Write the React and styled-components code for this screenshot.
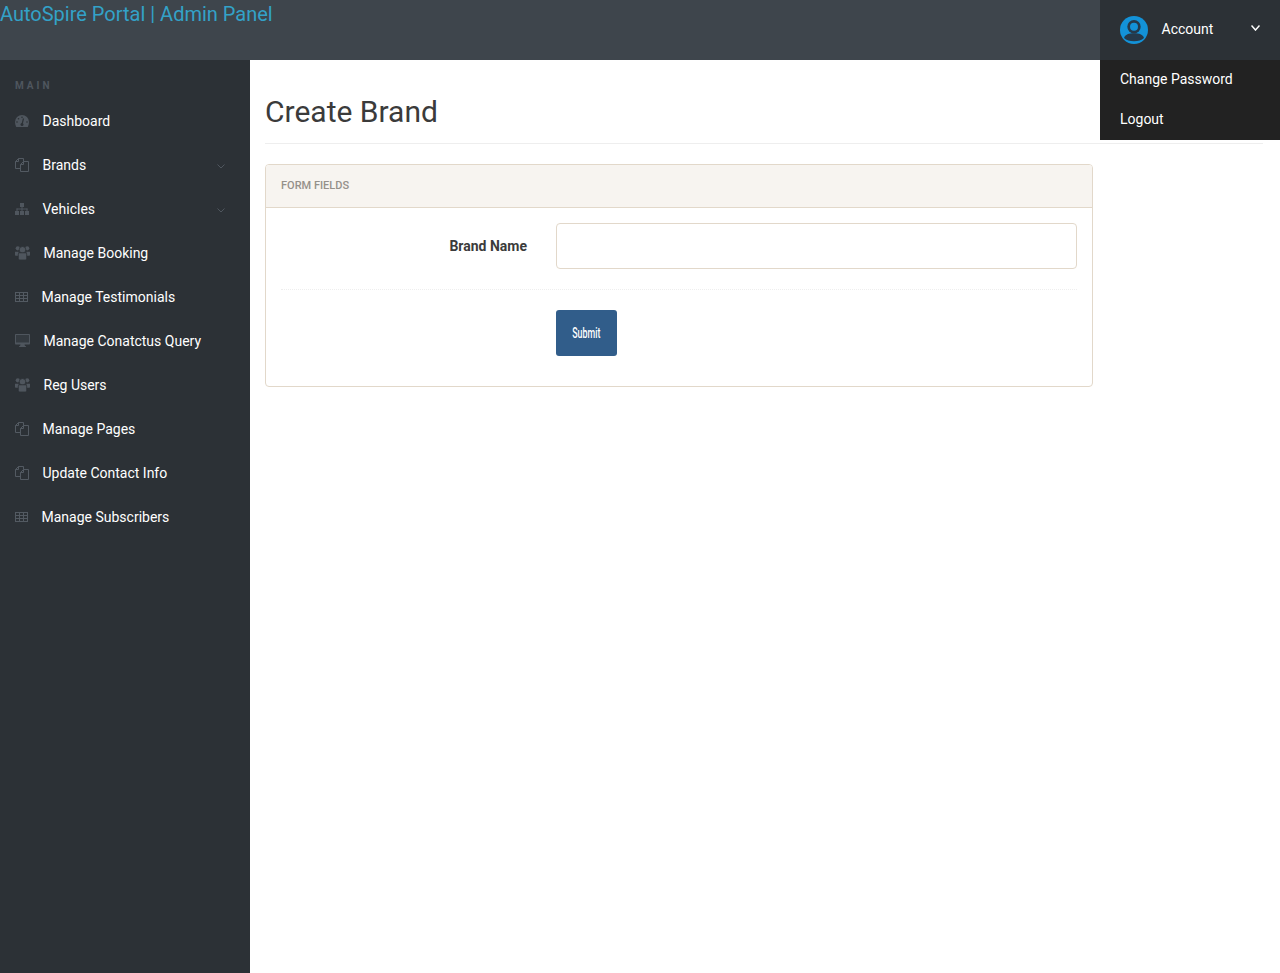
import styled, { createGlobalStyle } from 'styled-components';

const GlobalStyle = createGlobalStyle`
  html, body {
    margin: 0;
    padding: 0;
    background: #fff;
  }
  body {
    font-family: Roboto, "Liberation Sans", sans-serif;
    font-size: 14px;
    color: #3b3b3b;
  }
`;

const Page = styled.div`
  width: 1280px;
  height: 973px;
  display: flex;
  flex-direction: column;
  overflow: hidden;
`;

const TopBar = styled.header`
  height: 60px;
  flex: none;
  display: flex;
  justify-content: space-between;
  background: #3e454c;
`;

const Brand = styled.a`
  font-size: 20px;
  line-height: 28px;
  color: #33a2c8;
`;

const AccountWrap = styled.div`
  position: relative;
  width: 180px;
`;

const AccountButton = styled.div`
  height: 60px;
  display: flex;
  align-items: center;
  padding-left: 20px;
  background: #2c3136;
  color: #fff;
  font-size: 14px;
`;

const AccountName = styled.span`
  margin: 0 0 2px 13.5px;
  flex: 1;
`;

const AccountCaret = styled.svg`
  width: 9px;
  height: 6px;
  margin: 0 20px 5px 0;
  fill: none;
  stroke: #fff;
  stroke-width: 1.5;
`;

const Dropdown = styled.ul`
  position: absolute;
  top: 60px;
  left: 0;
  width: 100%;
  height: 80px;
  margin: 0;
  padding: 0;
  list-style: none;
  background: #222;
`;

const DropdownItem = styled.li`
  height: 40px;
  padding-left: 20px;
  line-height: 38px;
  color: #fff;
`;

const Body = styled.div`
  flex: 1;
  display: flex;
`;

const Sidebar = styled.nav`
  width: 250px;
  flex: none;
  padding-top: 18px;
  background: #2c3136;
  box-sizing: border-box;
`;

const SideLabel = styled.div`
  height: 21px;
  padding-left: 15px;
  font-size: 10px;
  font-weight: 700;
  line-height: 16px;
  letter-spacing: 3px;
  color: #4f565e;
`;

const SideItem = styled.div`
  height: 44px;
  display: flex;
  align-items: center;
  padding: 0 25px 0 15px;
  color: #fff;
  font-size: 14px;
`;

const SideIcon = styled.svg`
  flex: none;
  width: ${(p) => p.$w}px;
  height: ${(p) => p.$h}px;
  margin-right: 13.5px;
  fill: ${(p) => (p.$outline ? 'none' : '#4f565e')};
  stroke: ${(p) => (p.$outline ? '#535a62' : 'none')};
`;

const SideText = styled.span`
  flex: 1;
`;

const SideCaret = styled.svg`
  width: 8px;
  height: 5px;
  margin: 2px 0 0;
  fill: none;
  stroke: #4f565e;
  stroke-width: 1;
`;

const Main = styled.main`
  flex: 1;
  padding: 0 15px;
`;

const Title = styled.h2`
  width: 998px;
  margin: 0 0 20px;
  padding: 34px 0 13px;
  border-bottom: 1px solid #eee;
  font-size: 30px;
  font-weight: 400;
  line-height: 36px;
  color: #3b3b3b;
`;

const Panel = styled.section`
  width: 828px;
  box-sizing: border-box;
  border: 1px solid #e2d8ca;
  border-radius: 4px;
`;

const PanelHead = styled.div`
  height: 42px;
  padding-left: 15px;
  background: #f7f4f0;
  border-bottom: 1px solid #e2d8ca;
  border-radius: 3px 3px 0 0;
  font-size: 11px;
  font-weight: 500;
  line-height: 42px;
  color: #95908a;
`;

const PanelBody = styled.div`
  padding: 15px 15px 30px;
`;

const FieldRow = styled.div`
  display: flex;
  align-items: center;
  padding-bottom: 20px;
  margin-bottom: 20px;
  border-bottom: 1px dotted #eee;
`;

const FieldLabel = styled.label`
  width: 246px;
  flex: none;
  margin-right: 29px;
  text-align: right;
  font-weight: 700;
  color: #3b3b3b;
`;

const ButtonSlot = styled.div`
  margin-left: 275px;
`;

const TextInput = styled.input`
  flex: 1;
  height: 46px;
  box-sizing: border-box;
  border: 1px solid #e2d8ca;
  border-radius: 4px;
  background: #fff;
`;

const SubmitButton = styled.button`
  display: block;
  width: 61px;
  height: 46px;
  padding: 0;
  border: none;
  border-radius: 3px;
  background: #315d8a;
  color: #fff;
  font-family: Roboto, sans-serif;
  font-size: 14px;
  font-weight: 500;
`;

const SubmitLabel = styled.span`
  display: inline-block;
  transform: scaleX(0.63);
`;

const BG = '#2c3136';

const Dash = () => (
  <SideIcon $w={14} $h={12} viewBox="0 0 14 12">
    <path d="M7 0A7 7 0 0 0 0 7c0 1.800.4 3.400 1.200 5h11.600c.8-1.600 1.200-3.200 1.200-5A7 7 0 0 0 7 0z" />
    <g fill={BG}>
      <circle cx="7" cy="2.200" r=".8" />
      <circle cx="3.500" cy="3.700" r=".8" />
      <circle cx="2" cy="7" r=".8" />
      <circle cx="12" cy="7" r=".8" />
      <circle cx="7" cy="9.500" r="1.500" />
    </g>
    <path d="M7 9.500L8.500 3.500" stroke={BG} strokeWidth="1.200" />
  </SideIcon>
);

const Files = () => (
  <SideIcon $w={14} $h={14} $outline viewBox="0 0 14 14">
    <path d="M5.500 10.500H.5V3.500L3.500.5H8.500V3.500" />
    <path d="M3.500.5V3.500H.5" />
    <path d="M8.500 3.500H13.500V13.500H5.500V6.500z" />
    <path d="M8.500 3.500V6.500H5.500" />
  </SideIcon>
);

const Sitemap = () => (
  <SideIcon $w={14} $h={12} viewBox="0 0 14 12">
    <rect x="5" y="0" width="4" height="4" />
    <rect x="0" y="8" width="4" height="4" />
    <rect x="5" y="8" width="4" height="4" />
    <rect x="10" y="8" width="4" height="4" />
    <rect x="6.500" y="4" width="1" height="4" />
    <rect x="1.500" y="5.500" width="11" height="1" />
    <rect x="1.500" y="5.500" width="1" height="2.500" />
    <rect x="11.500" y="5.500" width="1" height="2.500" />
  </SideIcon>
);

const Users = () => (
  <SideIcon $w={15} $h={14} viewBox="0 0 15 14">
    <circle cx="2.800" cy="2.300" r="2.100" />
    <circle cx="12.200" cy="2.300" r="2.100" />
    <path d="M0 5.800h3.500v4H1c-.6 0-1-.4-1-1zM11.500 5.800H15v2.900c0 .6-.4 1-1 1h-2.500z" />
    <circle cx="7.500" cy="3.800" r="3.300" stroke={BG} strokeWidth=".8" />
    <path d="M3.300 8.300c0-.9.6-1.500 1.500-1.500h5.400c.9 0 1.500.6 1.500 1.500v4.200c0 .9-.6 1.500-1.500 1.500H4.800c-.9 0-1.500-.6-1.500-1.500z" stroke={BG} strokeWidth=".8" />
  </SideIcon>
);

const Table = () => (
  <SideIcon $w={13} $h={10} $outline viewBox="0 0 13 10">
    <rect x=".5" y=".5" width="12" height="9" />
    <path d="M.5 3.500h12M.5 6.500h12M4.500 .5v9M8.500 .5v9" />
  </SideIcon>
);

const Desktop = () => (
  <SideIcon $w={15} $h={14} viewBox="0 0 15 14">
    <path d="M1 0h13c.6 0 1 .4 1 1v8.500c0 .6-.4 1-1 1H9.500l.5 1.500h.9v1H4.100v-1H5l.5-1.500H1c-.6 0-1-.4-1-1V1c0-.6.4-1 1-1z" />
    <rect x="1" y="1" width="13" height="7.500" fill="#343a40" />
  </SideIcon>
);

const Chevron = ({ Shape, w, h }) => (
  <Shape viewBox={`0 0 ${w} ${h}`}>
    <path d={`M.5 .5L${w / 2} ${h - 1}L${w - 0.5} .5`} />
  </Shape>
);

const AvatarSvg = () => (
  <svg width="28" height="28" viewBox="0 0 28 28">
    <circle cx="14" cy="14" r="14" fill="#1392d8" />
    <circle cx="14" cy="10.700" r="6.700" fill="#25394a" />
    <circle cx="14" cy="10.700" r="4" fill="#1392d8" />
    <path d="M4 22C5 18.500 9 17.300 14 17.300s9 1.200 10 4.700c-2.500 2.300-5.800 3.200-10 3.200S6.500 24.300 4 22z" fill="#25394a" />
  </svg>
);

const menu = [
  { label: 'Dashboard', Icon: Dash },
  { label: 'Brands', Icon: Files, caret: true },
  { label: 'Vehicles', Icon: Sitemap, caret: true },
  { label: 'Manage Booking', Icon: Users },
  { label: 'Manage Testimonials', Icon: Table },
  { label: 'Manage Conatctus Query', Icon: Desktop },
  { label: 'Reg Users', Icon: Users },
  { label: 'Manage Pages', Icon: Files },
  { label: 'Update Contact Info', Icon: Files },
  { label: 'Manage Subscribers', Icon: Table },
];

export default function App() {
  return (
    <Page>
      <GlobalStyle />
      <TopBar>
        <Brand>AutoSpire Portal | Admin Panel</Brand>
        <AccountWrap>
          <AccountButton>
            <AvatarSvg />
            <AccountName>Account</AccountName>
            <Chevron Shape={AccountCaret} w={9} h={6} />
          </AccountButton>
          <Dropdown>
            <DropdownItem>Change Password</DropdownItem>
            <DropdownItem>Logout</DropdownItem>
          </Dropdown>
        </AccountWrap>
      </TopBar>
      <Body>
        <Sidebar>
          <SideLabel>MAIN</SideLabel>
          {menu.map(({ label, Icon, caret }) => (
            <SideItem key={label}>
              <Icon />
              <SideText>{label}</SideText>
              {caret && <Chevron Shape={SideCaret} w={8} h={5} />}
            </SideItem>
          ))}
        </Sidebar>
        <Main>
          <Title>Create Brand</Title>
          <Panel>
            <PanelHead>FORM FIELDS</PanelHead>
            <PanelBody>
              <FieldRow>
                <FieldLabel>Brand Name</FieldLabel>
                <TextInput />
              </FieldRow>
              <ButtonSlot>
                <SubmitButton><SubmitLabel>Submit</SubmitLabel></SubmitButton>
              </ButtonSlot>
            </PanelBody>
          </Panel>
        </Main>
      </Body>
    </Page>
  );
}
